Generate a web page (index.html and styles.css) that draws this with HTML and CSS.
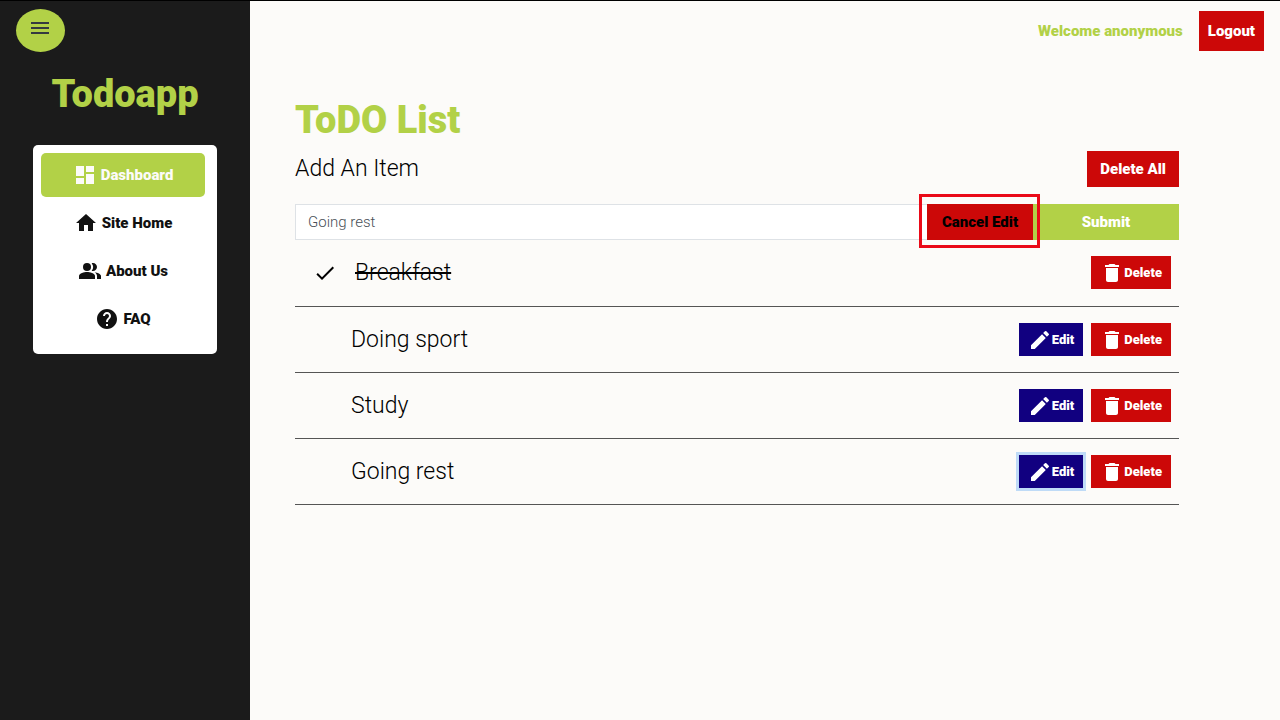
FILE: index.html
```html
<!DOCTYPE html>
<html lang="en">
<head>
<meta charset="utf-8">
<title>Todoapp</title>
<link rel="stylesheet" href="styles.css">
</head>
<body>
<svg class="sprite" aria-hidden="true">
  <symbol id="pencil" viewBox="0 0 24 24"><path d="M3 17.250V21h3.750L17.810 9.940l-3.750-3.750L3 17.250zM20.710 7.040a1 1 0 0 0 0-1.410l-2.340-2.340a1 1 0 0 0-1.410 0l-1.830 1.830 3.750 3.750 1.830-1.830z"/></symbol>
  <symbol id="trash" viewBox="0 0 24 24"><path d="M6 19c0 1.100.9 2 2 2h8c1.100 0 2-.9 2-2V7H6v12zM19 4h-3.500l-1-1h-5l-1 1H5v2h14V4z"/></symbol>
</svg>
<aside class="sidebar">
  <button class="menu-toggle" type="button" aria-label="Toggle menu">
    <svg class="icon" viewBox="0 0 24 24"><path d="M3 18h18v-2H3v2zm0-5h18v-2H3v2zm0-7v2h18V6H3z"/></svg>
  </button>
  <h1 class="brand">Todoapp</h1>
  <nav class="nav">
    <a class="nav-link active" href="#"><svg class="icon" viewBox="0 0 24 24"><path d="M3 13h8V3H3v10zm0 8h8v-6H3v6zm10 0h8V11h-8v10zm0-18v6h8V3h-8z"/></svg>Dashboard</a>
    <a class="nav-link" href="#"><svg class="icon" viewBox="0 0 24 24"><path d="M10 20v-6h4v6h5v-8h3L12 3 2 12h3v8z"/></svg>Site Home</a>
    <a class="nav-link" href="#"><svg class="icon" viewBox="0 0 24 24"><path d="M16.670 13.130C18.040 14.060 19 15.320 19 17v3h4v-3c0-2.180-3.570-3.470-6.330-3.870zM15 12c2.210 0 4-1.790 4-4s-1.790-4-4-4c-.47 0-.91.100-1.330.240a5.980 5.980 0 0 1 0 7.520c.42.140.86.240 1.330.240z"/><circle cx="9" cy="8" r="4"/><path d="M9 13c-2.670 0-8 1.340-8 4v3h16v-3c0-2.660-5.330-4-8-4z"/></svg>About Us</a>
    <a class="nav-link" href="#"><svg class="icon" viewBox="0 0 24 24"><path d="M12 2C6.480 2 2 6.480 2 12s4.480 10 10 10 10-4.480 10-10S17.520 2 12 2zm1 17h-2v-2h2v2zm2.070-7.750-.9.920C13.450 12.900 13 13.500 13 15h-2v-.5c0-1.100.45-2.100 1.170-2.830l1.240-1.260c.37-.36.590-.86.590-1.410 0-1.100-.9-2-2-2s-2 .9-2 2H8c0-2.210 1.790-4 4-4s4 1.790 4 4c0 .88-.36 1.680-.93 2.250z"/></svg>FAQ</a>
  </nav>
</aside>
<div class="page">
  <header class="topbar">
    <span class="welcome">Welcome anonymous</span>
    <button class="btn logout" type="button">Logout</button>
  </header>
  <main class="content">
    <h2 class="title">ToDO List</h2>
    <div class="add-head">
      <label class="add-label" for="item">Add An Item</label>
      <button class="btn" type="button">Delete All</button>
    </div>
    <form class="add-form">
      <input class="item-input" id="item" type="text" value="Going rest">
      <button class="btn cancel" type="button">Cancel Edit</button>
      <button class="btn submit" type="submit">Submit</button>
    </form>
    <ul class="todos">
      <li class="todo done">
        <svg class="icon" viewBox="0 0 24 24"><path d="M9 16.170 4.830 12l-1.420 1.410L9 19 21 7l-1.410-1.410z"/></svg>
        <span class="todo-text">Breakfast</span>
        <button class="btn small" type="button"><svg class="icon"><use href="#trash"/></svg>Delete</button>
      </li>
      <li class="todo">
        <span class="todo-text">Doing sport</span>
        <button class="btn small edit" type="button"><svg class="icon"><use href="#pencil"/></svg>Edit</button>
        <button class="btn small" type="button"><svg class="icon"><use href="#trash"/></svg>Delete</button>
      </li>
      <li class="todo">
        <span class="todo-text">Study</span>
        <button class="btn small edit" type="button"><svg class="icon"><use href="#pencil"/></svg>Edit</button>
        <button class="btn small" type="button"><svg class="icon"><use href="#trash"/></svg>Delete</button>
      </li>
      <li class="todo">
        <span class="todo-text">Going rest</span>
        <button class="btn small edit focused" type="button"><svg class="icon"><use href="#pencil"/></svg>Edit</button>
        <button class="btn small" type="button"><svg class="icon"><use href="#trash"/></svg>Delete</button>
      </li>
    </ul>
  </main>
</div>
</body>
</html>
```
FILE: styles.css
```css
* { box-sizing: border-box; }
:root {
  --green: #b2d147;
  --red: #cc0808;
  --blue: #110080;
  --dark: #1b1b1b;
}
body {
  margin: 0;
  min-height: 100vh;
  display: flex;
  border-top: 1px solid #000;
  background: #fcfbf9;
  color: #000;
  font: 15px/24px Roboto, sans-serif;
}
button, input { font: inherit; }
.sprite { display: none; }
.icon { width: 24px; height: 24px; fill: currentColor; flex: none; }

.sidebar { flex: 0 0 250px; background: var(--dark); }
.menu-toggle {
  display: block;
  margin: 8px 0 0 16px;
  padding: 7px 13px 12px 12px;
  border: 0;
  border-radius: 50%;
  background: var(--green);
  color: #343a40;
  line-height: 0;
}
.brand {
  margin: 19px 0 28px;
  color: var(--green);
  font-size: 38px;
  line-height: 46px;
  font-weight: 900;
  text-align: center;
}
.nav {
  display: flex;
  flex-direction: column;
  gap: 4px;
  margin: 0 33px;
  padding: 8px 12px 13px 8px;
  border-radius: 5px;
  background: #fff;
}
.nav-link {
  display: flex;
  align-items: center;
  justify-content: center;
  gap: 4px;
  padding: 10px 0;
  border-radius: 5px;
  color: #111;
  font-weight: 900;
  text-decoration: none;
}
.nav-link.active { background: var(--green); color: #fcfbf9; }

.page { flex: 1; min-width: 0; }
.topbar {
  display: flex;
  align-items: center;
  justify-content: flex-end;
  gap: 16px;
  padding: 10px 16px;
}
.welcome { color: var(--green); font-weight: 900; }
.btn {
  display: flex;
  align-items: center;
  justify-content: center;
  padding: 6px 13px;
  border: 0;
  background: var(--red);
  color: #fff;
  font-weight: 900;
}
.logout { padding: 8px 9px; }

.content { padding: 36px 101px 0 45px; }
.title {
  margin: 0;
  color: var(--green);
  font-size: 38px;
  line-height: 46px;
  font-weight: 900;
}
.add-head {
  display: flex;
  align-items: center;
  justify-content: space-between;
  margin: 8px 0 17px;
}
.add-label { font-size: 23px; line-height: 28px; font-weight: 300; }
.add-form { display: flex; }
.item-input {
  flex: 1;
  min-width: 0;
  padding: 5px 12px;
  border: 1px solid #dee2e6;
  border-right: 0;
  background: #fff;
  color: #495057;
  font-weight: 300;
}
.cancel {
  position: relative;
  z-index: 1;
  flex: 0 0 106px;
  padding: 6px 0;
  color: #000;
}
.cancel::after {
  content: "";
  position: absolute;
  inset: -10px -7px -8px -8px;
  border: 3px solid #ea0a18;
}
.submit { flex: 0 0 146px; background: var(--green); }

.todos { margin: 0; padding: 0; list-style: none; }
.todo {
  display: flex;
  align-items: center;
  gap: 8px;
  padding: 16px 8px 16px 56px;
  border-bottom: 1px solid #555;
}
.todo.done { padding: 16px 8px 17px 18px; gap: 18px; }
.todo-text { flex: 1; font-size: 23px; line-height: 30px; font-weight: 300; }
.done .todo-text { text-decoration: line-through; }
.small { padding: 5px 9px 4px; font-size: 13px; }
.edit { background: var(--blue); }
.focused { box-shadow: 0 0 0 3px #bfdbf7; }
```
